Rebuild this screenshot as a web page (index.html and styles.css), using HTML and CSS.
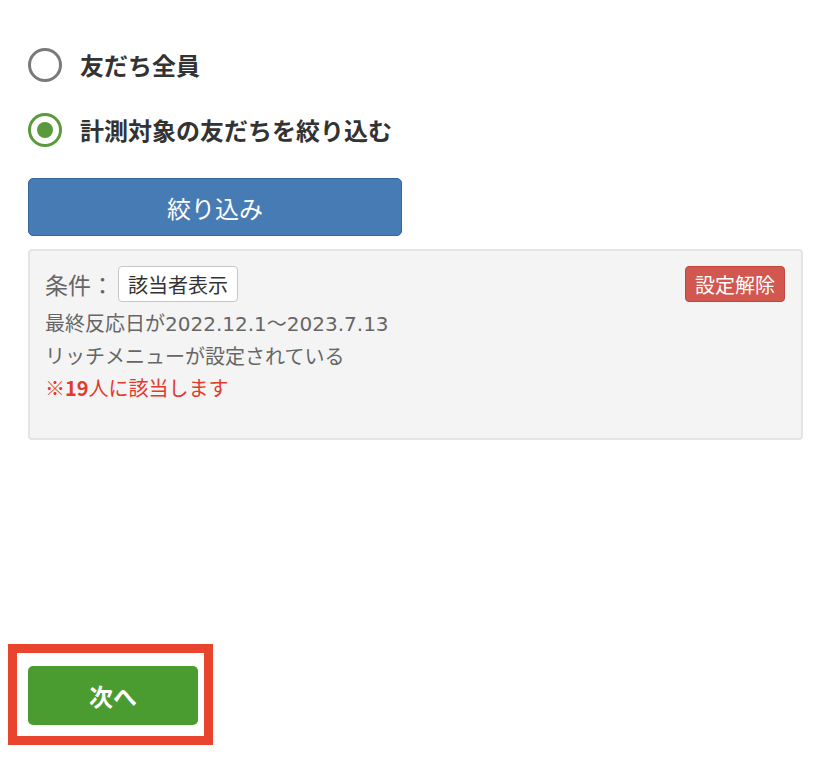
FILE: index.html
```html
<!DOCTYPE html>
<html lang="ja">
<head>
<meta charset="utf-8">
<title>絞り込み</title>
<link rel="stylesheet" href="styles.css">
</head>
<body>
<div class="page">
  <div class="radio-row">
    <span class="radio"></span>
    <span class="radio-label">友だち全員</span>
  </div>
  <div class="radio-row">
    <span class="radio checked"></span>
    <span class="radio-label">計測対象の友だちを絞り込む</span>
  </div>
  <button class="btn-filter">絞り込み</button>
  <div class="cond-box">
    <div class="cond-head">
      <div class="cond-left">
        <span class="cond-label">条件：</span>
        <span class="btn-show">該当者表示</span>
      </div>
      <span class="btn-clear">設定解除</span>
    </div>
    <div class="cond-line">最終反応日が<span class="num">2022.12.1</span>〜<span class="num">2023.7.13</span></div>
    <div class="cond-line">リッチメニューが設定されている</div>
    <div class="cond-line hit">※<b>19</b>人に該当します</div>
  </div>
  <div class="highlight">
    <button class="btn-next">次へ</button>
  </div>
</div>
</body>
</html>
```
FILE: styles.css
```css
html, body {
  margin: 0;
  padding: 0;
  background: #ffffff;
}
body {
  font-family: "Noto Sans CJK JP", "Noto Sans", sans-serif;
  color: #333333;
}
.page {
  padding: 48px 21px 0 28px;
}
.radio-row {
  display: flex;
  align-items: center;
  gap: 18px;
  height: 34px;
  margin-bottom: 31px;
}
.radio {
  box-sizing: border-box;
  width: 34px;
  height: 34px;
  border: 3px solid #7a7a7a;
  border-radius: 50%;
  display: flex;
  align-items: center;
  justify-content: center;
  flex: none;
}
.radio.checked {
  border-color: #5a9a3c;
}
.radio.checked::after {
  content: "";
  width: 16px;
  height: 16px;
  border-radius: 50%;
  background: #5a9a3c;
}
.radio-label {
  font-size: 24px;
  font-weight: 700;
  color: #333333;
  line-height: 34px;
}
.btn-filter {
  display: block;
  box-sizing: border-box;
  width: 374px;
  height: 58px;
  margin-top: 30px;
  background: #477bb4;
  border: 1px solid #36679c;
  border-radius: 5px;
  color: #ffffff;
  font-family: inherit;
  font-size: 24px;
  padding: 0;
}
.cond-box {
  box-sizing: border-box;
  margin-top: 13px;
  height: 191px;
  background: #f4f4f4;
  border: 2px solid #e4e4e4;
  border-radius: 4px;
  padding: 15px 16px 0 15px;
}
.cond-head {
  display: flex;
  justify-content: space-between;
  align-items: center;
  height: 36px;
}
.cond-left {
  display: flex;
  align-items: center;
}
.cond-label {
  font-size: 23px;
  color: #666666;
  line-height: 36px;
}
.btn-show {
  box-sizing: border-box;
  height: 36px;
  display: inline-flex;
  align-items: center;
  padding: 0 9px;
  background: #ffffff;
  border: 1px solid #c6c6c6;
  border-radius: 4px;
  font-size: 20px;
  color: #333333;
  margin-left: 4px;
}
.btn-clear {
  box-sizing: border-box;
  height: 36px;
  display: inline-flex;
  align-items: center;
  padding: 0 9px;
  background: #d1574f;
  border: 1px solid #c2463e;
  border-radius: 4px;
  font-size: 20px;
  color: #ffffff;
}
.cond-line {
  font-size: 20px;
  line-height: 32px;
  color: #666666;
}
.num {
  font-family: "DejaVu Sans", "Noto Sans CJK JP", sans-serif;
  font-size: 20px;
}
.cond-head + .cond-line {
  margin-top: 5px;
}
.cond-line.hit {
  color: #e23a2c;
}
.cond-line.hit b {
  font-weight: 700;
}
.highlight {
  box-sizing: border-box;
  width: 205px;
  height: 101px;
  margin: 204px 0 0 -20px;
  border: 9px solid #e8442e;
  padding: 13px 0 0 11px;
}
.btn-next {
  display: block;
  width: 170px;
  height: 59px;
  background: #4a9c30;
  border: none;
  border-radius: 5px;
  color: #ffffff;
  font-family: inherit;
  font-size: 24px;
  font-weight: 700;
  padding: 0;
}
```
